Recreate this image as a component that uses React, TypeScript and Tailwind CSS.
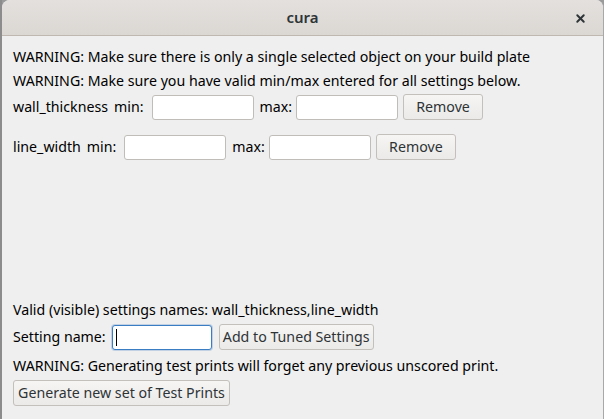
import { X } from 'lucide-react';

const FONT = { fontFamily: '"Noto Sans", "DejaVu Sans", sans-serif' };

function Field({ caret }: { caret?: boolean }) {
  return (
    <div
      className={`h-[25px] bg-white rounded-[3px] border flex items-center px-[3px] ${
        caret ? 'w-[100px] border-[#3b7dc2] shadow-[0_0_0_1px_rgba(59,125,194,0.25)]' : 'w-[102px] border-[#c0bdb9]'
      }`}
    >
      {caret && <span className="w-px h-[17px] bg-black" />}
    </div>
  );
}

function Button({ label, w }: { label: string; w: string }) {
  return (
    <button
      className={`h-[26px] ${w} rounded-[3px] border border-[#c3bfbb] bg-gradient-to-b from-[#f6f5f4] to-[#ebeae8] text-[#2e3436] text-[14.2px] leading-none flex items-center justify-center`}
    >
      {label}
    </button>
  );
}

function SettingRow({ name }: { name: string }) {
  return (
    <div className="flex items-center h-[26px]">
      <span>{name}</span>
      <span className="ml-[6px] mr-[8px]">min:</span>
      <Field />
      <span className="ml-[6px] mr-[4px]">max:</span>
      <Field />
      <span className="ml-[5px]">
        <Button label="Remove" w="w-[80px]" />
      </span>
    </div>
  );
}

export default function App() {
  return (
    <div className="w-[604px] h-[419px] bg-[#9a9a9a] flex" style={FONT}>
      <div className="w-[2px] h-full bg-[#8c8c8c]" />
      <div className="flex-1 flex flex-col bg-[#efefef] rounded-tl-[8px] rounded-tr-[8px] overflow-hidden border-r border-[#a8a8a8]">
        <div className="h-[36px] shrink-0 flex items-center justify-center relative bg-gradient-to-b from-[#e3e0dd] to-[#dbd8d4] border-b border-[#bfb8b1]">
          <span className="text-[15px] font-semibold text-[#2e3436]">cura</span>
          <X className="absolute right-[16px] top-[12px] w-[13px] h-[13px] text-[#2e3436]" strokeWidth={3.5} />
        </div>
        <div className="flex-1 flex flex-col pl-[11px] text-[14.2px] text-black">
          <div className="mt-[10px] h-[21px] flex items-center">WARNING: Make sure there is only a single selected object on your build plate</div>
          <div className="mt-[3px] h-[21px] flex items-center">WARNING: Make sure you have valid min/max entered for all settings below.</div>
          <div className="mt-[3px]">
            <SettingRow name="wall_thickness" />
          </div>
          <div className="mt-[14px]">
            <SettingRow name="line_width" />
          </div>
          <div className="flex-1" />
          <div className="h-[21px] flex items-center">Valid (visible) settings names: wall_thickness,line_width</div>
          <div className="mt-[4px] flex items-center h-[26px]">
            <span className="mr-[6px]">Setting name:</span>
            <Field caret />
            <span className="ml-[7px]">
              <Button label="Add to Tuned Settings" w="w-[155px]" />
            </span>
          </div>
          <div className="mt-[5px] h-[21px] flex items-center">WARNING: Generating test prints will forget any previous unscored print.</div>
          <div className="mt-[4px] mb-[13px]">
            <Button label="Generate new set of Test Prints" w="w-[217px]" />
          </div>
        </div>
      </div>
    </div>
  );
}
